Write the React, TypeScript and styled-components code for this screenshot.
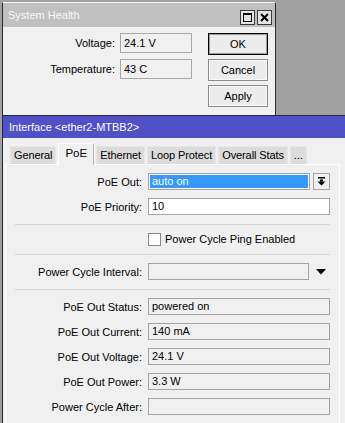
import React from 'react';
import styled, {createGlobalStyle} from 'styled-components';

const GlobalStyle = createGlobalStyle`
	html, body {
		margin: 0;
		padding: 0;
		background: #a0a0a0;
	}
	body {
		font-family: 'Liberation Sans', Arial, sans-serif;
		font-size: 11px;
		color: #000;
	}
`;

const Desktop = styled.div`
	width: 345px;
	height: 423px;
	overflow: hidden;
	background: #a0a0a0;
	display: flex;
	flex-direction: column;
`;

/* ---------- System Health window ---------- */

const HealthWindow = styled.div`
	flex: none;
	margin: 2px 0 0 2px;
	width: 272px;
	height: 112px;
	border-left: 1px solid #2a2a2a;
	border-right: 1px solid #2a2a2a;
	border-top: 1px solid #f6f6f6;
	background: #f0f0f0;
	display: flex;
	flex-direction: column;
`;

const TitleBar = styled.div<{$active?: boolean}>`
	flex: none;
	height: ${(p) => (p.$active ? 22 : 24)}px;
	display: flex;
	align-items: center;
	padding: 0 3px 0 ${(p) => (p.$active ? 6 : 5)}px;
	background: ${(p) => (p.$active ? '#5050c8' : '#c0c0c0')};
	color: ${(p) => (p.$active ? '#ffffff' : '#f8f8f8')};
	font-size: 11px;
`;

const TitleText = styled.span`
	flex: 1;
	white-space: nowrap;
`;

const TitleButton = styled.div`
	width: 13px;
	height: 13px;
	margin: 5px 0 0 2px;
	border: 1px solid #3a3a3a;
	background: #e4e4e4;
	display: flex;
	align-items: center;
	justify-content: center;
`;

const HealthBody = styled.div`
	flex: 1;
	display: flex;
	padding-top: 6px;
`;

const HealthForm = styled.div`
	display: grid;
	grid-template-columns: 112px 72px;
	grid-auto-rows: 20px;
	column-gap: 5px;
	row-gap: 6px;
	align-content: start;
`;

const HealthLabel = styled.div`
	text-align: right;
	line-height: 20px;
	white-space: nowrap;
`;

const HealthField = styled.div`
	box-sizing: border-box;
	height: 20px;
	border: 1px solid #a8a8a8;
	background: #f0f0f0;
	padding-left: 3px;
	line-height: 18px;
`;

const ButtonColumn = styled.div`
	display: flex;
	flex-direction: column;
	gap: 4px;
	margin-left: 16px;
`;

const DialogButton = styled.div<{$default?: boolean}>`
	box-sizing: border-box;
	width: 60px;
	height: 22px;
	border: 1px solid ${(p) => (p.$default ? '#000' : '#8c8c8c')};
	box-shadow: inset 0 0 0 1px ${(p) => (p.$default ? '#9a9a9a' : '#fafafa')};
	background: #ececec;
	text-align: center;
	line-height: 20px;
`;

/* ---------- Interface window ---------- */

const InterfaceWindow = styled.div`
	flex: 1;
	margin-left: 2px;
	width: 400px;
	border-left: 1px solid #2a2a2a;
	border-top: 1px solid #2a2a2a;
	background: #f0f0f0;
	display: flex;
	flex-direction: column;
`;

const TabStrip = styled.div`
	flex: none;
	height: 26px;
	display: flex;
	align-items: flex-end;
	gap: 2px;
	padding-left: 7px;
	position: relative;
	z-index: 1;
`;

const Tab = styled.div<{$selected?: boolean}>`
	box-sizing: border-box;
	height: ${(p) => (p.$selected ? 22 : 18)}px;
	margin-bottom: ${(p) => (p.$selected ? -1 : 0)}px;
	padding: 0 ${(p) => (p.$selected ? 6 : 3)}px;
	background: ${(p) => (p.$selected ? '#f0f0f0' : '#dcdcdc')};
	border: 1px solid ${(p) => (p.$selected ? '#ffffff' : '#e6e6e6')};
	border-right-color: ${(p) => (p.$selected ? '#b4b4b4' : '#e6e6e6')};
	border-bottom: none;
	line-height: ${(p) => (p.$selected ? 18 : 17)}px;
	white-space: nowrap;
	letter-spacing: ${(p) => (p.$selected ? 0 : -0.1)}px;
	font-size: ${(p) => (p.$selected ? 11.5 : 11)}px;
`;

const Panel = styled.div`
	flex: 1;
	margin-left: 2px;
	width: 333px;
	border: 1px solid #ffffff;
	border-bottom: none;
	display: flex;
	flex-direction: column;
	gap: 8px;
	padding-top: 8px;
`;

const Row = styled.div`
	display: grid;
	grid-template-columns: 136px 182px;
	column-gap: 6px;
	align-items: center;
	height: 17px;
`;

const Label = styled.div`
	text-align: right;
	white-space: nowrap;
`;

const Field = styled.div<{$readonly?: boolean}>`
	box-sizing: border-box;
	flex: 1;
	height: 17px;
	border: 1px solid #a4a4a4;
	background: ${(p) => (p.$readonly ? '#f0f0f0' : '#ffffff')};
	padding: 1px;
	line-height: 13px;
	white-space: nowrap;
	overflow: hidden;
`;

const FieldText = styled.span<{$selected?: boolean}>`
	display: block;
	height: 13px;
	padding-left: 2px;
	background: ${(p) => (p.$selected ? '#3399ff' : 'transparent')};
	color: ${(p) => (p.$selected ? '#ffffff' : '#000000')};
`;

const Combo = styled.div`
	display: flex;
	align-items: center;
	gap: 3px;
`;

const DropButton = styled.div`
	box-sizing: border-box;
	width: 17px;
	height: 17px;
	border: 1px solid #a4a4a4;
	background: #f0f0f0;
	display: flex;
	align-items: center;
	justify-content: center;
`;

const DropArrow = styled.div`
	width: 18px;
	display: flex;
	justify-content: center;
`;

const Separator = styled.div`
	height: 1px;
	margin: 1px 0 0 9px;
	width: 315px;
	background: #d6d6d6;
`;

const CheckRow = styled.div`
	display: flex;
	align-items: center;
	height: 12px;
	padding-left: 142px;
	gap: 4px;
	white-space: nowrap;
`;

const CheckBox = styled.div`
	box-sizing: border-box;
	width: 13px;
	height: 13px;
	border: 1px solid #8a8a8a;
	background: #ffffff;
`;

const MaximizeIcon = () => (
	<svg width="9" height="9" viewBox="0 0 9 9">
		<rect x="0.5" y="0.5" width="8" height="8" fill="none" stroke="#000" />
		<rect x="0" y="0" width="9" height="2" fill="#000" />
	</svg>
);

const CloseIcon = () => (
	<svg width="9" height="9" viewBox="0 0 9 9">
		<path d="M1 1 L8 8 M8 1 L1 8" stroke="#000" strokeWidth="2" />
	</svg>
);

const DropDownIcon = () => (
	<svg width="9" height="9" viewBox="0 0 9 9">
		<rect x="1" y="0" width="7" height="1.5" fill="#000" />
		<rect x="3" y="2.5" width="3" height="2" fill="#000" />
		<path d="M0.5 4.5 H8.5 L4.5 8.5 Z" fill="#000" />
	</svg>
);

const TriangleIcon = () => (
	<svg width="10" height="6" viewBox="0 0 10 6">
		<path d="M0 0 H10 L5 5.5 Z" fill="#000" />
	</svg>
);

const tabs = ['General', 'PoE', 'Ethernet', 'Loop Protect', 'Overall Stats', '...'];

const stats = [
	{label: 'PoE Out Status:', value: 'powered on'},
	{label: 'PoE Out Current:', value: '140 mA'},
	{label: 'PoE Out Voltage:', value: '24.1 V'},
	{label: 'PoE Out Power:', value: '3.3 W'},
	{label: 'Power Cycle After:', value: ''},
];

const App: React.FC = () => {
	return (
		<Desktop>
			<GlobalStyle />
			<HealthWindow>
				<TitleBar>
					<TitleText>System Health</TitleText>
					<TitleButton>
						<MaximizeIcon />
					</TitleButton>
					<TitleButton>
						<CloseIcon />
					</TitleButton>
				</TitleBar>
				<HealthBody>
					<HealthForm>
						<HealthLabel>Voltage:</HealthLabel>
						<HealthField>24.1 V</HealthField>
						<HealthLabel>Temperature:</HealthLabel>
						<HealthField>43 C</HealthField>
					</HealthForm>
					<ButtonColumn>
						<DialogButton $default>OK</DialogButton>
						<DialogButton>Cancel</DialogButton>
						<DialogButton>Apply</DialogButton>
					</ButtonColumn>
				</HealthBody>
			</HealthWindow>

			<InterfaceWindow>
				<TitleBar $active>
					<TitleText>Interface &lt;ether2-MTBB2&gt;</TitleText>
				</TitleBar>
				<TabStrip>
					{tabs.map((t) => (
						<Tab key={t} $selected={t === 'PoE'}>
							{t}
						</Tab>
					))}
				</TabStrip>
				<Panel>
					<Row>
						<Label>PoE Out:</Label>
						<Combo>
							<Field>
								<FieldText $selected>auto on</FieldText>
							</Field>
							<DropButton>
								<DropDownIcon />
							</DropButton>
						</Combo>
					</Row>
					<Row>
						<Label>PoE Priority:</Label>
						<Field>
							<FieldText>10</FieldText>
						</Field>
					</Row>
					<Separator />
					<CheckRow>
						<CheckBox />
						<span>Power Cycle Ping Enabled</span>
					</CheckRow>
					<Separator />
					<Row>
						<Label>Power Cycle Interval:</Label>
						<Combo>
							<Field $readonly />
							<DropArrow>
								<TriangleIcon />
							</DropArrow>
						</Combo>
					</Row>
					<Separator />
					{stats.map((s) => (
						<Row key={s.label}>
							<Label>{s.label}</Label>
							<Field $readonly>
								<FieldText>{s.value}</FieldText>
							</Field>
						</Row>
					))}
				</Panel>
			</InterfaceWindow>
		</Desktop>
	);
};

export default App;
